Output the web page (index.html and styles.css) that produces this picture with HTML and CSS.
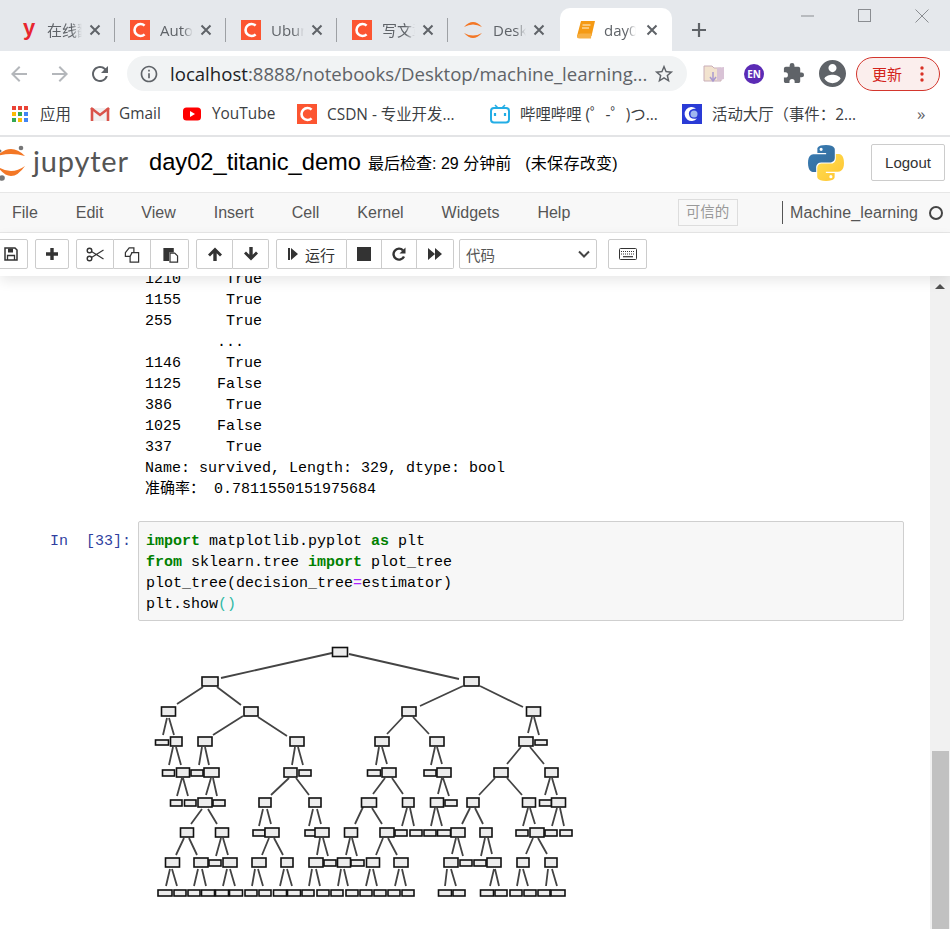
FILE: index.html
```html
<!DOCTYPE html>
<html lang="zh">
<head>
<meta charset="utf-8">
<title>day02_titanic_demo</title>
<link rel="stylesheet" href="styles.css">
</head>
<body>
<svg class="defs" width="0" height="0" aria-hidden="true">
  <symbol id="csdn" viewBox="0 0 20 20">
    <rect width="20" height="20" fill="#fc5531"/>
    <path d="M14.6 5.6A6 6 0 1 0 14.6 14.4" fill="none" stroke="#fff" stroke-width="2.6"/>
  </symbol>
  <symbol id="x" viewBox="0 0 12 12">
    <path d="M1.5 1.5l9 9M10.500 1.500l-9 9" fill="none" stroke="#5f6368" stroke-width="2"/>
  </symbol>
</svg>

<div class="tabstrip">
  <div class="tab tab-sep">
    <span class="favicon fav-y">y</span><span class="tab-title tab-title-cjk">在线翻译</span>
    <svg class="tab-x"><use href="#x"/></svg>
  </div>
  <div class="tab tab-sep">
    <svg class="favicon"><use href="#csdn"/></svg><span class="tab-title">AutoML</span>
    <svg class="tab-x"><use href="#x"/></svg>
  </div>
  <div class="tab tab-sep">
    <svg class="favicon"><use href="#csdn"/></svg><span class="tab-title">Ubuntu</span>
    <svg class="tab-x"><use href="#x"/></svg>
  </div>
  <div class="tab tab-sep">
    <svg class="favicon"><use href="#csdn"/></svg><span class="tab-title">写文章</span>
    <svg class="tab-x"><use href="#x"/></svg>
  </div>
  <div class="tab">
    <svg class="favicon" viewBox="0 0 20 20"><path d="M1 7Q10 -3 19 7Q10 2 1 7zM1 13Q10 23 19 13Q10 18 1 13z" fill="#f37726"/></svg><span class="tab-title">Desktop</span>
    <svg class="tab-x"><use href="#x"/></svg>
  </div>
  <div class="tab tab-active">
    <svg class="favicon" viewBox="0 0 20 20"><path d="M5 1h14l-3.500 15H1z" fill="#f59a14"/><path d="M1 16q1-2.500 3.500-2.500h11L15 18.500H3.500q-3 0-2.500-2.500z" fill="#f7b045"/><path d="M6.500 5h8M6 8h7" stroke="#fff3d8" stroke-width="1"/></svg><span class="tab-title tab-title-active">day02</span>
    <svg class="tab-x"><use href="#x"/></svg>
  </div>
  <svg class="tab-new" viewBox="0 0 16 16"><path d="M8 1v14M1 8h14" stroke="#5f6368" stroke-width="2.200"/></svg>
  <div class="winctl">
    <svg class="win-btn" viewBox="0 0 14 14"><path d="M0 7h13" stroke="#8a8d91" stroke-width="1"/></svg>
    <svg class="win-btn" viewBox="0 0 14 14"><rect x=".5" y=".5" width="12" height="12" fill="none" stroke="#8a8d91"/></svg>
    <svg class="win-btn" viewBox="0 0 14 14"><path d="M.5 .5l13 13M13.500 .5l-13 13" stroke="#8a8d91" stroke-width="1"/></svg>
  </div>
</div>

<div class="navbar">
  <svg class="nav-ico" viewBox="0 0 24 24"><path d="M20 11H7.830l5.590-5.590L12 4l-8 8 8 8 1.410-1.410L7.830 13H20v-2z" fill="#b4b7bb"/></svg>
  <svg class="nav-ico" viewBox="0 0 24 24"><path d="M4 11h12.170l-5.590-5.590L12 4l8 8-8 8-1.410-1.410L16.170 13H4v-2z" fill="#b4b7bb"/></svg>
  <svg class="nav-ico nav-reload" viewBox="0 0 24 24"><path d="M17.650 6.350A7.958 7.958 0 0 0 12 4c-4.420 0-7.990 3.580-7.990 8s3.570 8 7.990 8c3.730 0 6.840-2.550 7.730-6h-2.080A5.990 5.990 0 0 1 12 18c-3.310 0-6-2.690-6-6s2.690-6 6-6c1.660 0 3.140.69 4.220 1.780L13 11h7V4l-2.350 2.350z" fill="#5f6368"/></svg>
  <div class="omnibox">
    <svg class="omni-info" viewBox="0 0 24 24"><path d="M11 7h2v2h-2zm0 4h2v6h-2zm1-9C6.480 2 2 6.480 2 12s4.480 10 10 10 10-4.480 10-10S17.520 2 12 2zm0 18c-4.410 0-8-3.590-8-8s3.590-8 8-8 8 3.590 8 8-3.590 8-8 8z" fill="#5f6368"/></svg>
    <span class="url"><span class="url-host">localhost</span>:8888/notebooks/Desktop/machine_learning...</span>
    <svg class="omni-star" viewBox="0 0 24 24"><path d="M22 9.240l-7.190-.62L12 2 9.190 8.630 2 9.240l5.460 4.730L5.820 21 12 17.270 18.180 21l-1.630-7.030L22 9.240zM12 15.400l-3.760 2.270 1-4.280-3.320-2.880 4.380-.38L12 6.100l1.710 4.040 4.380.38-3.320 2.880 1 4.280L12 15.400z" fill="#5f6368"/></svg>
  </div>
  <svg class="ext-folder" viewBox="0 0 22 22"><path d="M1 3h8l2 2h7v13H1z" fill="#f2e3cf" stroke="#c9aeb8"/><path d="M14 5l7-1v12l-7 2z" fill="#d9c3d6"/><path d="M10 9v8M7 14l3 4 3-4" fill="none" stroke="#a99ad0" stroke-width="1.500"/></svg>
  <span class="ext-en">EN</span>
  <svg class="ext-puzzle" viewBox="0 0 24 24"><path d="M20.500 11H19V7c0-1.100-.9-2-2-2h-4V3.500a2.500 2.500 0 0 0-5 0V5H4c-1.100 0-2 .9-2 2v3.800h1.500a2.700 2.700 0 0 1 0 5.400H2V20c0 1.100.9 2 2 2h3.800v-1.500a2.700 2.700 0 0 1 5.400 0V22H17c1.100 0 2-.9 2-2v-4h1.500a2.500 2.500 0 0 0 0-5z" fill="#5f6368"/></svg>
  <svg class="avatar" viewBox="2 2 20 20"><path d="M12 2C6.480 2 2 6.480 2 12s4.480 10 10 10 10-4.480 10-10S17.520 2 12 2zm0 3c1.660 0 3 1.340 3 3s-1.340 3-3 3-3-1.340-3-3 1.340-3 3-3zm0 14.200c-2.500 0-4.710-1.280-6-3.220.03-1.990 4-3.080 6-3.080 1.990 0 5.970 1.090 6 3.080-1.290 1.940-3.500 3.220-6 3.220z" fill="#5f6368"/></svg>
  <div class="update"><span>更新</span><svg class="update-dots" viewBox="0 0 4 16"><circle cx="2" cy="2" r="1.700"/><circle cx="2" cy="8" r="1.700"/><circle cx="2" cy="14" r="1.700"/></svg></div>
</div>

<div class="bookmarks">
  <div class="bm bm-apps">
    <svg class="bm-ico-apps" viewBox="0 0 16 16"><rect width="4" height="4" fill="#ea4335"/><rect x="6" width="4" height="4" fill="#ea4335"/><rect x="12" width="4" height="4" fill="#ea4335"/><rect y="6" width="4" height="4" fill="#fbbc05"/><rect x="6" y="6" width="4" height="4" fill="#34a853"/><rect x="12" y="6" width="4" height="4" fill="#4285f4"/><rect y="12" width="4" height="4" fill="#34a853"/><rect x="6" y="12" width="4" height="4" fill="#fbbc05"/><rect x="12" y="12" width="4" height="4" fill="#4285f4"/></svg>
    <span>应用</span>
  </div>
  <div class="bm bm-gmail">
    <svg class="bm-ico" viewBox="0 0 20 20"><path d="M1 4h18v13H1z" fill="#f1f1f1"/><path d="M1 4l9 7 9-7" fill="none" stroke="#d9534a" stroke-width="2.500"/><path d="M2 4v13M18 4v13" stroke="#d9534a" stroke-width="2.600"/></svg>
    <span>Gmail</span>
  </div>
  <div class="bm bm-yt">
    <svg class="bm-ico-yt" viewBox="0 0 18 14"><rect width="18" height="13" y=".5" rx="3.500" fill="#f00"/><path d="M7 4l5 3-5 3z" fill="#fff"/></svg>
    <span>YouTube</span>
  </div>
  <div class="bm bm-csdn">
    <svg class="bm-ico"><use href="#csdn"/></svg>
    <span>CSDN - 专业开发...</span>
  </div>
  <div class="bm bm-bili">
    <svg class="bm-ico" viewBox="0 0 20 20"><path d="M5 1l3 3M15 1l-3 3" stroke="#23ade5" stroke-width="1.600"/><rect x="1" y="4" width="18" height="14.500" rx="3" fill="none" stroke="#23ade5" stroke-width="2"/><path d="M5 9v3M15 9v3" stroke="#23ade5" stroke-width="2.200"/></svg>
    <span>哔哩哔哩 (゜-゜)つ...</span>
  </div>
  <div class="bm bm-act">
    <svg class="bm-ico" viewBox="0 0 20 20"><rect width="20" height="20" fill="#2a3bd6"/><path d="M14 4.500A7 7 0 1 0 15 14.500Q8 16 7 10.500T14 4.500z" fill="#fff"/><circle cx="12" cy="10" r="3.500" fill="#9fb6ef"/></svg>
    <span>活动大厅（事件：2...</span>
  </div>
  <span class="bm-more">»</span>
</div>

<header class="jp-head">
  <div class="jp-brand">
    <svg class="jp-logo" viewBox="0 137 32 50"><path d="M-3 155Q11 141 25 155Q11 151 -3 155zM-3 165Q11 185 25 165Q11 175 -3 165z" fill="#f37726"/><circle cx="21" cy="147" r="2.300" fill="#767677"/><circle cx="2" cy="177" r="2.800" fill="#767677"/><circle cx="0" cy="150" r="1.500" fill="#767677"/></svg>
    <span class="jp-word">jupyter</span>
  </div>
  <span class="nb-name">day02_titanic_demo</span>
  <span class="nb-check">最后检查: 29 分钟前</span>
  <span class="nb-save">(未保存改变)</span>
  <svg class="py-logo" viewBox="0 0 110 110">
    <defs>
      <linearGradient id="pb" x1="0" y1="0" x2="1" y2="1"><stop offset="0" stop-color="#387eb8"/><stop offset="1" stop-color="#366994"/></linearGradient>
      <linearGradient id="py" x1="0" y1="0" x2="1" y2="1"><stop offset="0" stop-color="#ffc331"/><stop offset="1" stop-color="#ffe052"/></linearGradient>
    </defs>
    <path fill="url(#pb)" d="M54.900 0C26.800 0 28.600 12.200 28.600 12.200l0 12.600h26.800v3.800H17.900S0 26.600 0 54.900s15.700 27.300 15.700 27.300h9.300V69s-.5-15.700 15.400-15.700h26.600s14.900.2 14.900-14.400V14.700S84.200 0 54.900 0zM40.100 8.500a4.800 4.800 0 1 1 0 9.600 4.800 4.800 0 0 1 0-9.600z"/>
    <path fill="url(#py)" transform="rotate(180 55 55)" d="M54.900 0C26.800 0 28.600 12.200 28.600 12.200l0 12.600h26.800v3.800H17.900S0 26.600 0 54.900s15.700 27.300 15.700 27.300h9.300V69s-.5-15.700 15.400-15.700h26.600s14.900.2 14.900-14.400V14.700S84.200 0 54.900 0zM40.100 8.500a4.800 4.800 0 1 1 0 9.600 4.800 4.800 0 0 1 0-9.600z"/>
  </svg>
  <div class="logout">Logout</div>
</header>

<nav class="jp-menu">
  <span>File</span><span>Edit</span><span>View</span><span>Insert</span><span>Cell</span><span>Kernel</span><span>Widgets</span><span>Help</span>
  <div class="menu-right">
    <span class="trusted">可信的</span>
    <span class="kernel-name">Machine_learning</span>
    <span class="kernel-dot"></span>
  </div>
</nav>

<div class="jp-tools">
  <div class="btn-group group-save">
    <div class="tb"><svg class="ti" viewBox="0 0 16 16"><path d="M2 2h10l2 2v10H2z" fill="none" stroke="#333" stroke-width="1.500"/><path d="M5 2.500h5v4H5z" fill="#333"/><path d="M4.500 14V9.500h7V14" fill="none" stroke="#333" stroke-width="1.300"/></svg></div>
  </div>
  <div class="btn-group">
    <div class="tb"><svg class="ti" viewBox="0 0 16 16"><path d="M8 2v12M2 8h12" stroke="#333" stroke-width="3.400"/></svg></div>
  </div>
  <div class="btn-group">
    <div class="tb tb-38"><svg class="ti-lg" viewBox="0 0 18 16"><circle cx="3.500" cy="4" r="2.300" fill="none" stroke="#333" stroke-width="1.400"/><circle cx="3.500" cy="12" r="2.300" fill="none" stroke="#333" stroke-width="1.400"/><path d="M5.500 5l12 7.500M5.500 11l12-7.500" stroke="#333" stroke-width="1.200"/></svg></div>
    <div class="tb tb-37"><svg class="ti-lg" viewBox="0 0 18 18"><path d="M2 7l4-5h5v5l-2 0v4H2z" fill="none" stroke="#333" stroke-width="1.300"/><path d="M9 7h7v10H7v-6z" fill="#fff" stroke="#333" stroke-width="1.300"/></svg></div>
    <div class="tb tb-38"><svg class="ti-lg" viewBox="0 0 18 18"><path d="M2 2h11v5H8v9H2z" fill="#333"/><path d="M9 7.500h5l3 3V17H9z" fill="#fff" stroke="#333" stroke-width="1.300"/></svg></div>
  </div>
  <div class="btn-group">
    <div class="tb tb-37"><svg class="ti" viewBox="0 0 16 16"><path d="M8 1.500L15 8.500 13 10.500 9.700 7.200V15H6.300V7.200L3 10.500 1 8.500z" fill="#333"/></svg></div>
    <div class="tb tb-36"><svg class="ti" viewBox="0 0 16 16"><path d="M8 14.500L15 7.500 13 5.500 9.700 8.800V1H6.300V8.800L3 5.500 1 7.500z" fill="#333"/></svg></div>
  </div>
  <div class="btn-group">
    <div class="tb tb-run"><svg class="ti-run" viewBox="0 0 10 14"><path d="M0 1h2v12H0zM3 1l7 6-7 6z" fill="#333"/></svg><span>运行</span></div>
    <div class="tb tb-35"><svg class="ti-stop" viewBox="0 0 14 14"><rect width="14" height="14" fill="#333"/></svg></div>
    <div class="tb tb-35"><svg class="ti" viewBox="0 0 16 16"><path d="M13 10.500A5.500 5.500 0 1 1 12 4.300" fill="none" stroke="#333" stroke-width="2.400"/><path d="M14.500 1.500v6h-6z" fill="#333"/></svg></div>
    <div class="tb tb-37"><svg class="ti" viewBox="0 0 16 14"><path d="M1 1l7 6-7 6zM8 1l7 6-7 6z" fill="#333"/></svg></div>
  </div>
  <div class="cell-type">
    <span>代码</span>
    <svg class="chev" viewBox="0 0 12 8"><path d="M1 1.500l5 5 5-5" fill="none" stroke="#444" stroke-width="2"/></svg>
  </div>
  <div class="btn-group group-keys">
    <div class="tb tb-39"><svg class="ti-keys" viewBox="0 0 18 12"><rect x=".5" y=".5" width="17" height="11" rx="1" fill="#fff" stroke="#333"/><path d="M2 3.500h14M2 6h14" stroke="#333" stroke-dasharray="1 1"/><path d="M4 8.700h10" stroke="#333" stroke-width="1.200"/></svg></div>
  </div>
</div>

<div class="main">
  <div class="nb">
    <pre class="output">1210     True
1155     True
255      True
        ...
1146     True
1125    False
386      True
1025    False
337      True
Name: survived, Length: 329, dtype: bool
准确率： 0.7811550151975684</pre>
    <div class="cell">
      <div class="prompt">In  [33]:</div>
      <pre class="code"><b>import</b> matplotlib.pyplot <b>as</b> plt
<b>from</b> sklearn.tree <b>import</b> plot_tree
plot_tree(decision_tree<i>=</i>estimator)
plt.show<em>()</em></pre>
    </div>
    <svg class="tree" viewBox="145 640 440 265" width="440" height="265">
      <path class="edge" d="M332 653L221 678M349 654L459 679
M203 687L177 704M217 687L241 705M463 686L420 706M480 686L523 707
M167 718L163 735M169 718L174 735M243 716L213 735M258 717L287 736M403 717L387 734M413 717L429 734M532 717L528 733M534 717L539 735
M173 747L169 765M176 747L181 765M202 747L199 765M205 747L209 765M295 747L292 765M298 747L303 765M379 747L376 765M382 747L387 764M435 747L431 765M437 747L442 764M521 747L507 764M530 747L544 764
M182 778L177 796M183 778L188 796M211 778L206 795M213 778L217 796M289 778L271 795M296 778L309 795M385 778L373 794M392 778L403 794M442 778L438 794M443 778L449 796M495 778L479 795M507 778L522 795M550 778L545 795M552 778L557 795
M202 809L191 824M208 809L217 824M263 809L259 826M267 809L271 824M313 809L309 826M317 809L321 824M363 807L355 824M372 808L382 824M407 808L402 826M410 808L414 826M435 808L431 826M437 808L442 826M470 808L462 824M475 808L483 824M528 808L523 826M530 808L535 824M557 808L552 826M560 808L564 826
M184 838L176 855M189 838L197 855M221 838L216 856M223 838L228 855M269 838L262 855M274 838L283 855M320 838L317 855M323 838L328 856M350 838L346 855M352 838L357 856M383 838L376 855M388 838L397 855M456 838L452 854M458 838L463 856M485 838L481 856M488 838L492 854M533 838L526 854M538 838L547 854
M170 869L166 886M172 869L177 886M198 869L194 886M202 869L206 886M227 869L223 886M230 869L235 886M255 869L252 886M258 869L263 886M284 869L280 886M287 869L292 886M312 869L309 886M316 869L320 886M341 869L338 886M344 869L348 886M370 869L366 886M373 869L377 886M399 869L395 886M402 869L406 886M447 869L445 886M451 869L456 886M494 869L490 886M495 869L499 886M520 869L517 886M523 869L528 886M548 869L546 886M552 869L557 886"/>
      <g class="nodes">
        <rect x="332.500" y="647.500" width="15" height="9"/>
        <rect x="202" y="677" width="16" height="9"/><rect x="464" y="677" width="15" height="9"/>
        <rect x="161.500" y="707" width="14" height="9"/><rect x="244" y="707" width="14" height="9"/><rect x="402" y="707" width="14" height="9"/><rect x="526.500" y="707" width="14" height="9"/>
        <rect x="155.500" y="740" width="13" height="5"/><rect x="170.500" y="737" width="11.500" height="9"/><rect x="198" y="737" width="14" height="9"/><rect x="290" y="737" width="14" height="9"/><rect x="375" y="737" width="14" height="9"/><rect x="430" y="737" width="14" height="9"/><rect x="519" y="737" width="14" height="9"/><rect x="535" y="740" width="12" height="5"/>
        <rect x="162.500" y="770" width="12" height="6"/><rect x="176.500" y="768" width="13" height="9"/><rect x="191" y="770" width="12" height="6"/><rect x="204" y="768" width="15" height="9"/><rect x="284" y="768" width="13" height="9"/><rect x="299" y="770" width="12" height="6"/><rect x="367.500" y="770" width="13" height="6"/><rect x="382" y="768" width="14" height="9"/><rect x="424" y="770" width="12" height="6"/><rect x="437" y="768" width="14" height="9"/><rect x="494" y="768" width="14" height="9"/><rect x="545" y="768" width="13" height="9"/>
        <rect x="170.500" y="800" width="11.500" height="6"/><rect x="184.500" y="800" width="11.500" height="6"/><rect x="198" y="798" width="14" height="9"/><rect x="213" y="800" width="12" height="6"/><rect x="259" y="798" width="12" height="9"/><rect x="309" y="798" width="12" height="9"/><rect x="361.500" y="798" width="15" height="9"/><rect x="402.500" y="798" width="11.500" height="9"/><rect x="430.500" y="798" width="13" height="9"/><rect x="445" y="800" width="12" height="6"/><rect x="467" y="798" width="12" height="9"/><rect x="522.500" y="798" width="13" height="9"/><rect x="539.500" y="800" width="12" height="6"/><rect x="551.500" y="798" width="14" height="9"/>
        <rect x="180.500" y="828" width="13" height="9"/><rect x="215.500" y="828" width="13" height="9"/><rect x="253" y="830" width="12" height="6"/><rect x="265" y="828" width="14" height="9"/><rect x="305" y="830" width="12" height="6"/><rect x="315" y="828" width="14" height="9"/><rect x="344.500" y="828" width="13" height="9"/><rect x="380" y="828" width="14" height="9"/><rect x="395" y="830" width="12" height="6"/><rect x="410" y="830" width="12" height="6"/><rect x="424" y="830" width="12" height="6"/><rect x="437.500" y="830" width="13" height="6"/><rect x="451" y="828" width="14" height="9"/><rect x="480" y="828" width="12" height="9"/><rect x="516" y="830" width="12" height="6"/><rect x="530" y="828" width="14" height="9"/><rect x="545" y="830" width="12" height="6"/><rect x="560" y="830" width="12" height="6"/>
        <rect x="165.500" y="858" width="14" height="9"/><rect x="194" y="858" width="14" height="9"/><rect x="209" y="860" width="12" height="6"/><rect x="223" y="858" width="14" height="9"/><rect x="252" y="858" width="14" height="9"/><rect x="281" y="858" width="12" height="9"/><rect x="309" y="858" width="14" height="9"/><rect x="324" y="860" width="12" height="6"/><rect x="337.500" y="858" width="13" height="9"/><rect x="351" y="860" width="13" height="6"/><rect x="366.500" y="858" width="13" height="9"/><rect x="394" y="858" width="14" height="9"/><rect x="444" y="858" width="14" height="9"/><rect x="460" y="860" width="12" height="6"/><rect x="474" y="860" width="12" height="6"/><rect x="487" y="858" width="14" height="9"/><rect x="517" y="858" width="12" height="9"/><rect x="545" y="858" width="12" height="9"/>
        <rect x="158" y="890" width="14" height="6"/><rect x="174" y="890" width="12" height="6"/><rect x="188" y="890" width="12" height="6"/><rect x="201.500" y="890" width="13" height="6"/><rect x="215.500" y="890" width="13" height="6"/><rect x="229.500" y="890" width="13" height="6"/><rect x="245" y="890" width="12" height="6"/><rect x="259" y="890" width="12" height="6"/><rect x="273.500" y="890" width="13" height="6"/><rect x="287.500" y="890" width="13" height="6"/><rect x="302" y="890" width="12" height="6"/><rect x="317" y="890" width="12" height="6"/><rect x="331" y="890" width="12" height="6"/><rect x="346" y="890" width="12" height="6"/><rect x="360" y="890" width="12" height="6"/><rect x="374" y="890" width="12" height="6"/><rect x="388" y="890" width="12" height="6"/><rect x="402" y="890" width="12" height="6"/><rect x="438.500" y="890" width="13" height="6"/><rect x="453" y="890" width="12" height="6"/><rect x="480.500" y="890" width="13" height="6"/><rect x="495" y="890" width="12" height="6"/><rect x="510" y="890" width="12" height="6"/><rect x="524" y="890" width="12" height="6"/><rect x="538" y="890" width="12" height="6"/><rect x="551" y="890" width="14" height="6"/>
      </g>
    </svg>
  </div>
  <div class="scrollbar">
    <span class="scroll-up"></span>
    <span class="scroll-thumb"></span>
  </div>
</div>
</body>
</html>
```

FILE: styles.css
```css
* { box-sizing: border-box; }
html, body { margin: 0; height: 929px; overflow: hidden; background: #fff; }
body {
  width: 950px;
  display: flex;
  flex-direction: column;
  font-family: "Liberation Sans", "Noto Sans CJK SC", sans-serif;
}
.defs { position: absolute; }

/* tab strip */
.tabstrip {
  height: 51px;
  flex: none;
  background: #e5e8ec;
  display: flex;
  align-items: flex-end;
  padding-left: 4px;
  font-family: "Open Sans", "Noto Sans CJK SC", sans-serif;
}
.tab {
  width: 111px;
  height: 43px;
  flex: none;
  display: flex;
  align-items: center;
  padding-left: 15px;
  position: relative;
}
.tab-sep::after {
  content: "";
  position: absolute;
  right: 0;
  top: 10px;
  width: 1px;
  height: 24px;
  background: #9da0a4;
}
.tab-active {
  width: 112px;
  background: #fff;
  border-radius: 10px 10px 0 0;
  padding-left: 16px;
  margin-left: 1px;
}
.favicon { width: 20px; height: 20px; flex: none; }
.fav-y {
  color: #e8262f;
  font: bold 22px/16px "Liberation Sans", sans-serif;
  text-align: center;
}
.tab-title {
  width: 33px;
  margin-left: 10px;
  flex: none;
  overflow: hidden;
  white-space: nowrap;
  font-size: 15px;
  color: #5f6368;
  -webkit-mask-image: linear-gradient(90deg, #000 70%, transparent);
  mask-image: linear-gradient(90deg, #000 70%, transparent);
}
.tab-title-cjk { margin-left: 8px; width: 35px; }
.tab-title-active { width: 32px; margin-left: 8px; }
.tab-x { width: 12px; height: 12px; margin-left: 7px; flex: none; }
.tab-active .tab-x { margin-left: 10px; }
.tab-new { width: 16px; height: 16px; margin: 0 0 13px 19px; flex: none; }
.winctl {
  margin-left: auto;
  align-self: flex-start;
  display: flex;
  gap: 43px;
  padding: 9px 21px 0 0;
}
.win-btn { width: 14px; height: 14px; }

/* address bar */
.navbar {
  height: 45px;
  flex: none;
  display: flex;
  align-items: center;
  background: #fff;
  padding: 5px 0 5px 7px;
}
.nav-ico { width: 24px; height: 24px; margin-right: 17px; flex: none; }
.nav-reload { margin-right: 15px; margin-left: -1px; }
.omnibox {
  width: 560px;
  height: 35px;
  flex: none;
  border-radius: 18px;
  background: #f1f3f4;
  display: flex;
  align-items: center;
  padding-left: 12px;
}
.omni-info { width: 20px; height: 20px; flex: none; }
.url {
  margin-left: 11px;
  font: 18.6px "Open Sans", sans-serif;
  color: #5f6368;
  white-space: nowrap;
}
.url-host { color: #202124; }
.omni-star { width: 22px; height: 22px; margin-left: auto; margin-right: 12px; flex: none; }
.ext-folder { width: 22px; height: 22px; margin-left: 16px; flex: none; }
.ext-en {
  width: 20px;
  height: 20px;
  margin-left: 19px;
  flex: none;
  border-radius: 50%;
  background: #5b2bb5;
  color: #fff;
  font: bold 10px/20px "Open Sans", sans-serif;
  text-align: center;
}
.ext-puzzle { width: 23px; height: 23px; margin-left: 18px; flex: none; }
.avatar { width: 27px; height: 27px; margin-left: 14px; flex: none; }
.update {
  width: 84px;
  height: 34px;
  margin-left: 10px;
  flex: none;
  border: 1.5px solid #d3362d;
  border-radius: 17px;
  background: #fbeeed;
  color: #d3231b;
  display: flex;
  align-items: center;
  padding-left: 15px;
  font-size: 15px;
}
.update-dots { width: 4px; height: 16px; margin-left: 18px; fill: #d93025; }

/* bookmarks */
.bookmarks {
  height: 41px;
  flex: none;
  display: flex;
  align-items: center;
  padding: 0 0 4px 12px;
  font: 15.4px "Open Sans", "Noto Sans CJK SC", sans-serif;
  color: #3c4043;
  border-bottom: 2px solid #e3e4e6;
}
.bm { display: flex; align-items: center; gap: 10px; flex: none; white-space: nowrap; }
.bm-apps { width: 78px; gap: 12px; }
.bm-gmail { width: 93px; gap: 9px; }
.bm-yt { width: 114px; gap: 11px; }
.bm-csdn { width: 193px; }
.bm-bili { width: 192px; }
.bm-act { width: 235px; }
.bm-ico { width: 20px; height: 20px; flex: none; }
.bm-ico-apps { width: 16px; height: 16px; flex: none; }
.bm-ico-yt { width: 18px; height: 14px; flex: none; }
.bm-more { font-size: 17px; color: #5f6368; }

/* jupyter header */
.jp-head {
  height: 55px;
  flex: none;
  display: flex;
  align-items: center;
  padding-bottom: 4px;
  background: #fff;
}
.jp-brand { width: 149px; flex: none; display: flex; align-items: center; height: 50px; }
.jp-logo { width: 32px; height: 50px; flex: none; }
.jp-word {
  margin: 0 0 3px 1px;
  font: 29px "Lato", sans-serif;
  letter-spacing: .8px;
  color: #555;
  line-height: 40px;
}
.nb-name { font-size: 23.7px; color: #000; margin-bottom: 1px; }
.nb-check { margin-left: 7px; font-size: 16px; color: #000; padding-bottom: 2px; }
.nb-save { margin-left: 14px; font-size: 16px; letter-spacing: .3px; color: #000; padding-bottom: 2px; }
.py-logo { width: 36px; height: 36px; margin-left: auto; flex: none; }
.logout {
  width: 74px;
  height: 37px;
  margin: 0 5px 0 27px;
  flex: none;
  border: 1px solid #ccc;
  border-radius: 2px;
  background: #fff;
  color: #333;
  font-size: 15px;
  line-height: 35px;
  text-align: center;
}

/* menu */
.jp-menu {
  height: 41px;
  flex: none;
  display: flex;
  align-items: center;
  gap: 38px;
  padding-left: 12px;
  background: #f8f8f8;
  border-top: 1px solid #e7e7e7;
  border-bottom: 1px solid #e7e7e7;
  font-size: 16px;
  color: #555;
}
.menu-right { margin-left: auto; display: flex; align-items: center; padding-right: 7px; }
.trusted {
  width: 60px;
  height: 27px;
  border: 1px solid #ddd;
  font-size: 14.500px;
  line-height: 25px;
  text-align: center;
  color: #999;
  margin-right: 44.500px;
}
.kernel-name { border-left: 1px solid #555; padding-left: 7px; line-height: 23px; letter-spacing: .1px; }
.kernel-dot {
  width: 14px;
  height: 14px;
  margin-left: 11px;
  border: 2px solid #444;
  border-radius: 50%;
}

/* toolbar */
.jp-tools {
  height: 43px;
  flex: none;
  display: flex;
  align-items: flex-start;
  gap: 7px;
  padding-top: 6px;
  background: #fff;
  position: relative;
  z-index: 2;
  box-shadow: 0 5px 12px rgba(0, 0, 0, .09);
}
.btn-group { display: flex; flex: none; }
.group-save { margin-left: -6px; }
.group-keys { margin-left: 4px; }
.tb {
  width: 34px;
  height: 30px;
  flex: none;
  display: flex;
  align-items: center;
  justify-content: center;
  gap: 7px;
  background: #fff;
  border: 1px solid #ccc;
  border-left-width: 0;
  font-size: 15px;
  color: #333;
}
.tb:first-child { border-left-width: 1px; border-radius: 2px 0 0 2px; }
.tb:last-child { border-radius: 0 2px 2px 0; }
.tb:only-child { border-radius: 2px; }
.tb-35 { width: 35px; }
.tb-36 { width: 36px; }
.tb-37 { width: 37px; }
.tb-38 { width: 38px; }
.tb-39 { width: 39px; }
.tb-run { width: 71px; }
.ti { width: 16px; height: 16px; }
.ti-lg { width: 18px; height: 17px; }
.ti-run { width: 10px; height: 14px; }
.ti-stop { width: 14px; height: 14px; }
.ti-keys { width: 18px; height: 12px; }
.cell-type {
  width: 138px;
  height: 30px;
  flex: none;
  margin-left: -2px;
  display: flex;
  align-items: center;
  justify-content: space-between;
  padding: 0 6px 0 6px;
  border: 1px solid #ccc;
  border-radius: 2px;
  font-size: 14.500px;
  color: #555;
}
.chev { width: 12px; height: 8px; }

/* notebook */
.main { flex: 1; min-height: 0; display: flex; overflow: hidden; }
.nb { flex: 1; min-width: 0; overflow: hidden; padding: 0 26px 0 0; }
.output, .code {
  margin: 0;
  font: 15px/21px "Liberation Mono", "Noto Sans CJK SC", monospace;
  color: #000;
}
.output { margin: -7px 0 0 145px; height: 231px; }
.cell { display: flex; margin-top: 21px; }
.prompt {
  width: 138px;
  flex: none;
  padding: 10px 7px 0 0;
  text-align: right;
  white-space: pre;
  font: 15px/21px "Liberation Mono", monospace;
  color: #303f9f;
}
.code {
  flex: 1;
  height: 100px;
  padding: 9px 7px 0;
  background: #f7f7f7;
  border: 1px solid #cfcfcf;
  border-radius: 2px;
}
.code b { color: #008000; font-weight: 700; }
.code i { color: #aa22ff; font-style: normal; }
.code em { color: #2fb9a5; font-style: normal; }
.tree { display: block; margin: 19px 0 0 145px; filter: blur(.4px); }
.edge { fill: none; stroke: #444; stroke-width: 1.800; }
.nodes rect { fill: #ececec; stroke: #111; stroke-width: 1.600; }

/* scrollbar */
.scrollbar {
  width: 20px;
  flex: none;
  background: #f1f1f1;
  display: flex;
  flex-direction: column;
  justify-content: space-between;
  align-items: center;
}
.scroll-up {
  margin-top: 8px;
  width: 0;
  height: 0;
  border: 5px solid transparent;
  border-top-width: 0;
  border-bottom: 5px solid #505050;
}
.scroll-thumb { width: 17px; height: 178px; background: #c1c1c1; }
```
